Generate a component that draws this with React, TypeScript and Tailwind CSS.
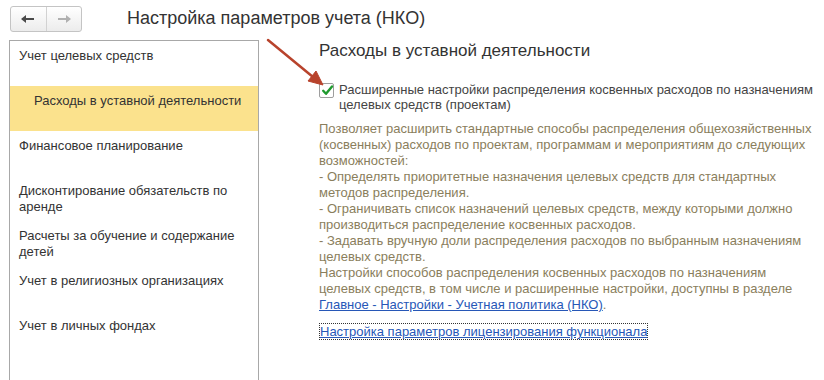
const menu = [
  { label: "Учет целевых средств" },
  { label: "Расходы в уставной деятельности", active: true },
  { label: "Финансовое планирование" },
  { label: "Дисконтирование обязательств по аренде" },
  { label: "Расчеты за обучение и содержание детей" },
  { label: "Учет в религиозных организациях" },
  { label: "Учет в личных фондах" },
];

const description = [
  "Позволяет расширить стандартные способы распределения общехозяйственных (косвенных) расходов по проектам, программам и мероприятиям до следующих возможностей:",
  "- Определять приоритетные назначения целевых средств для стандартных методов распределения.",
  "- Ограничивать список назначений целевых средств, между которыми должно производиться распределение косвенных расходов.",
  "- Задавать вручную доли распределения расходов по выбранным назначениям целевых средств.",
];

function NavButtons() {
  return (
    <div className="flex h-[26px] w-[72px] overflow-hidden rounded-[3px] border border-[#c4c4c4] bg-gradient-to-b from-white to-[#ececec]">
      <button className="flex flex-1 items-center justify-center border-r border-[#d2d2d2]">
        <svg width="14" height="10" viewBox="0 0 14 10">
          <path d="M0 5 L5 1 L5 4 L13 4 L13 6 L5 6 L5 9 Z" fill="#4a4a4a" />
        </svg>
      </button>
      <button className="flex flex-1 items-center justify-center">
        <svg width="14" height="10" viewBox="0 0 14 10">
          <path d="M14 5 L9 1 L9 4 L1 4 L1 6 L9 6 L9 9 Z" fill="#b0b0b0" />
        </svg>
      </button>
    </div>
  );
}

export default function App() {
  return (
    <div className="relative h-[380px] w-[824px] overflow-hidden bg-white font-['Liberation_Sans',Arial,sans-serif] text-[13px] text-[#333]">
      {/* header: history buttons + form title */}
      <div className="flex h-[40px] items-start pl-[10px] pt-[6px]">
        <NavButtons />
        <div className="ml-[45px] mt-[1px] text-[18px] leading-[22px] text-[#333]">
          Настройка параметров учета (НКО)
        </div>
      </div>

      <div className="flex">
        {/* section list */}
        <div className="ml-[9px] h-[345px] w-[250px] border-x border-t border-[#a8a8a8]">
          {menu.map((item) => (
            <div
              key={item.label}
              className={
                item.active
                  ? "h-[45px] bg-[#fbe28d] pl-[24px] pr-[9px] pt-[7px] leading-[16px]"
                  : "h-[45px] pl-[9px] pr-[9px] pt-[7px] leading-[16px]"
              }
            >
              {item.label}
            </div>
          ))}
        </div>

        {/* settings content */}
        <div className="ml-[60px] w-[495px]">
          <div className="mt-[1px] text-[17px] leading-[20px] text-[#333]">
            Расходы в уставной деятельности
          </div>
          <div className="mt-[21px] flex items-start">
            <div className="relative mt-[1px] h-[15px] w-[15px] shrink-0 rounded-[2px] border border-[#9e9e9e] bg-white">
              <svg className="absolute left-[1px] top-[0px]" width="13" height="13" viewBox="0 0 13 13">
                <path d="M2.2 6.8 L5 9.8 L11 2.4" fill="none" stroke="#1f9a2e" strokeWidth="2.4" strokeLinecap="round" strokeLinejoin="round" />
              </svg>
            </div>
            <div className="ml-[5px] leading-[15px] text-[#444]">
              Расширенные настройки распределения косвенных расходов по назначениям целевых средств (проектам)
            </div>
          </div>
          <div className="mt-[9px] leading-[16px] text-[#8a7e5c]">
            {description.map((line) => (
              <div key={line}>{line}</div>
            ))}
            <div>
              Настройки способов распределения косвенных расходов по назначениям целевых средств, в том числе и расширенные настройки, доступны в разделе{" "}
              <a className="text-[#2757b7] underline">Главное - Настройки - Учетная политика (НКО)</a>.
            </div>
          </div>
          <div className="mt-[9px]">
            <a className="border border-dotted border-[#333] leading-[15px] text-[#2757b7] underline">
              Настройка параметров лицензирования функционала
            </a>
          </div>
        </div>
      </div>

      {/* callout arrow pointing at the checkbox */}
      <svg className="pointer-events-none absolute left-0 top-0" width="824" height="380">
        <line x1="268" y1="40" x2="313" y2="77" stroke="#b8432c" strokeWidth="2.5" strokeLinecap="round" />
        <path d="M323 85 L308 81 L316 71 Z" fill="#b8432c" stroke="#b8432c" strokeWidth="1" strokeLinejoin="round" />
      </svg>
    </div>
  );
}
